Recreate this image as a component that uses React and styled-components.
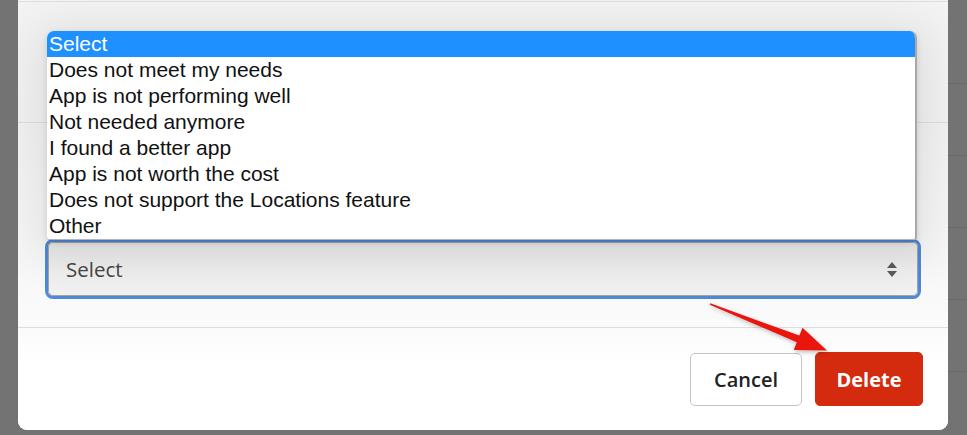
import React from 'react';
import styled, { createGlobalStyle } from 'styled-components';

const GlobalStyle = createGlobalStyle`
  html, body {
    margin: 0;
    padding: 0;
    background: #737373;
    overflow: hidden;
  }
  #root {
    height: 435px;
  }
`;

const Page = styled.div`
  display: flex;
  align-items: flex-start;
  height: 435px;
  position: relative;
`;

const Gutter = styled.div`
  width: 18px;
  flex: none;
`;

const BackRows = styled.div`
  flex: 1;
  display: flex;
  flex-direction: column;
  padding-top: 12px;
`;

const BackRow = styled.div`
  height: 71px;
  border-bottom: 1px solid #686868;
`;

const Modal = styled.div`
  width: 930px;
  flex: none;
  background: #fff;
  border-radius: 0 0 9px 9px;
  display: flex;
  flex-direction: column;
  overflow: hidden;
`;

const Header = styled.div`
  height: 1px;
  background: #f4f4f4;
  border-bottom: 1px solid #dedede;
`;

const Section = styled.div`
  border-bottom: 1px solid #dedede;
  background: ${p => p.$tint ? 'linear-gradient(#f3f3f3, #f1f1f1)' : 'linear-gradient(#f1f1f1, #f7f7f7 70%, #fbfbfb)'};
  height: ${p => p.$h}px;
  box-sizing: border-box;
  padding: ${p => p.$pad || 0};
`;

const SelectWrap = styled.div`
  position: relative;
`;

const Trigger = styled.div`
  height: 60px;
  box-sizing: border-box;
  border: 3px solid #4f88d6;
  border-radius: 8px;
  display: flex;
`;

const TriggerInner = styled.div`
  flex: 1;
  border: 1px solid #a3a3a3;
  border-radius: 5px;
  background: linear-gradient(180deg, #e6e6e6 0%, #eeeeee 55%, #f1f1f1 100%);
  display: flex;
  align-items: center;
  justify-content: space-between;
  padding: 0 19px 0 17px;
  font-family: "Open Sans", "Noto Sans", sans-serif;
  font-size: 20.5px;
  color: #454545;
`;

const Listbox = styled.ul`
  position: absolute;
  left: 2px;
  right: 4px;
  bottom: 59px;
  margin: 0;
  padding: 0;
  list-style: none;
  background: #fff;
  border-right: 2px solid #a9a9a9;
  border-bottom: 1px solid #b5b5b5;
  border-radius: 7px 7px 3px 3px;
  overflow: hidden;
  box-shadow: 0 6px 40px 14px rgba(0, 0, 0, 0.07), 0 2px 6px rgba(0, 0, 0, 0.12);
  z-index: 2;
`;

const Option = styled.li`
  height: 26px;
  line-height: 26px;
  padding-left: 2px;
  font-family: "Liberation Sans", Arial, sans-serif;
  font-size: 21px;
  color: ${p => p.$active ? '#fff' : '#111'};
  background: ${p => p.$active ? '#1e90ff' : 'transparent'};
  white-space: nowrap;
`;

const Footer = styled.div`
  height: 102px;
  display: flex;
  justify-content: flex-end;
  align-items: flex-start;
  gap: 13px;
  padding: 24px 25px 0 0;
  box-sizing: border-box;
  background: linear-gradient(#fbfbfb, #fff 40%);
`;

const Button = styled.button`
  height: ${p => p.$primary ? 54 : 53}px;
  margin-top: ${p => p.$primary ? 0 : 1}px;
  width: ${p => p.$primary ? 108 : 112}px;
  border-radius: 5px;
  font-family: "Open Sans", "Noto Sans", sans-serif;
  font-size: 20px;
  font-weight: ${p => p.$primary ? 700 : 600};
  color: ${p => p.$primary ? '#fff' : '#222'};
  background: ${p => p.$primary ? '#d42a0e' : '#fff'};
  border: 1px solid ${p => p.$primary ? '#d42a0e' : '#c4c4c4'};
  padding: 0;
`;

const Annotation = styled.svg`
  position: absolute;
  left: 0;
  top: 0;
  pointer-events: none;
  z-index: 5;
`;

const reasons = [
  'Select',
  'Does not meet my needs',
  'App is not performing well',
  'Not needed anymore',
  'I found a better app',
  'App is not worth the cost',
  'Does not support the Locations feature',
  'Other',
];

const Chevrons = () => (
  <svg width="12" height="17" viewBox="0 0 12 17">
    <path d="M6 1 L11 7 L1 7 Z" fill="#5a5a5a" />
    <path d="M6 16 L11 10 L1 10 Z" fill="#5a5a5a" />
  </svg>
);

const App = () => {
  return (
    <>
      <GlobalStyle />
      <Page>
        <Gutter />
        <Modal>
          <Header />
          <Section $tint $h={121} />
          <Section $h={205} $pad="116px 27px 28px 27px">
            <SelectWrap>
              <Listbox>
                {reasons.map((r, i) => (
                  <Option key={r} $active={i === 0}>{r}</Option>
                ))}
              </Listbox>
              <Trigger>
                <TriggerInner>
                  <span>Select</span>
                  <Chevrons />
                </TriggerInner>
              </Trigger>
            </SelectWrap>
          </Section>
          <Footer>
            <Button>Cancel</Button>
            <Button $primary>Delete</Button>
          </Footer>
        </Modal>
        <BackRows>
          {[0, 1, 2, 3, 4].map(i => <BackRow key={i} />)}
        </BackRows>
        <Annotation width="967" height="435">
          <defs>
            <filter id="arrowShadow" x="-10%" y="-30%" width="130%" height="160%">
              <feDropShadow dx="1" dy="2" stdDeviation="2" floodColor="#000" floodOpacity="0.25" />
            </filter>
          </defs>
          <polygon
            points="710.2,303.3 799.4,335.6 802.5,327.8 827,350.5 793.7,350 796.8,342.2 709.8,304.7"
            fill="#e8130f"
            filter="url(#arrowShadow)"
          />
        </Annotation>
      </Page>
    </>
  );
};

export default App;
